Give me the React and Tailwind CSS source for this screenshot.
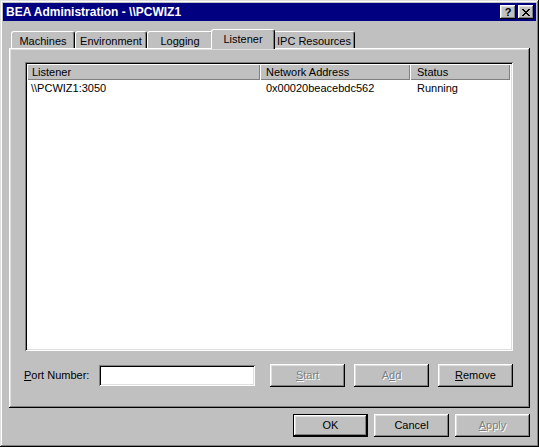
import React from "react";

const raised =
  "shadow-[inset_-1px_-1px_#000,inset_1px_1px_#fff,inset_-2px_-2px_#808080,inset_2px_2px_#dfdfdf]";
const sunken =
  "shadow-[inset_1px_1px_#808080,inset_-1px_-1px_#fff,inset_2px_2px_#000,inset_-2px_-2px_#dfdfdf]";

const tabs = [
  { label: "Machines", w: "w-[64px]" },
  { label: "Environment", w: "w-[72px]" },
  { label: "Logging", w: "w-[66px]" },
  { label: "Listener", w: "w-[64px]", active: true },
  { label: "IPC Resources", w: "w-[82px]" },
];

function Btn({ children, disabled, isDefault, className = "" }) {
  return (
    <button
      type="button"
      className={`w-[75px] h-[23px] bg-[#c0c0c0] flex items-center justify-center leading-none ${
        isDefault
          ? "border border-black shadow-[inset_-1px_-1px_#000,inset_1px_1px_#fff,inset_-2px_-2px_#808080,inset_2px_2px_#dfdfdf]"
          : raised
      } ${disabled ? "text-[#808080] [text-shadow:1px_1px_0_#fff]" : "text-black"} ${className}`}
    >
      {children}
    </button>
  );
}

function CloseGlyph() {
  const px = [
    [0, 0], [1, 0], [6, 0], [7, 0],
    [1, 1], [2, 1], [5, 1], [6, 1],
    [2, 2], [3, 2], [4, 2], [5, 2],
    [3, 3], [4, 3],
    [2, 4], [3, 4], [4, 4], [5, 4],
    [1, 5], [2, 5], [5, 5], [6, 5],
    [0, 6], [1, 6], [6, 6], [7, 6],
  ];
  return (
    <svg width="8" height="7" viewBox="0 0 8 7" shapeRendering="crispEdges">
      {px.map(([x, y]) => (
        <rect key={`${x}-${y}`} x={x} y={y} width="1" height="1" fill="#000" />
      ))}
    </svg>
  );
}

export default function App() {
  return (
    <div
      className="w-[539px] h-[447px] bg-[#c0c0c0] p-[3px] flex flex-col text-[11px] text-black shadow-[inset_-1px_-1px_#000,inset_1px_1px_#dfdfdf,inset_-2px_-2px_#808080,inset_2px_2px_#fff]"
      style={{ fontFamily: '"Liberation Sans", Arial, sans-serif' }}
    >
      {/* title bar */}
      <div className="h-[18px] bg-[#000080] flex items-center pl-[3px] pr-[2px]">
        <span className="text-white font-bold text-[12px] flex-1">
          {"BEA Administration - \\\\PCWIZ1"}
        </span>
        <div className={`w-[16px] h-[14px] bg-[#c0c0c0] ${raised} flex items-center justify-center font-bold text-[11px] leading-none`}>
          ?
        </div>
        <div className={`w-[16px] h-[14px] ml-[2px] bg-[#c0c0c0] ${raised} flex items-center justify-center`}>
          <CloseGlyph />
        </div>
      </div>

      {/* tabs + panel */}
      <div className="mt-[8px] px-[6px]">
        <div className="flex items-end h-[19px] pl-[2px]">
          {tabs.map((t) =>
            t.active ? (
              <div
                key={t.label}
                className={`${t.w} h-[20px] -mb-px -mx-[2px] relative z-10 bg-[#c0c0c0] border-t border-l border-white border-r border-r-black rounded-t-[3px] shadow-[inset_-1px_0_#808080] flex justify-center pt-[1px]`}
              >
                {t.label}
              </div>
            ) : (
              <div
                key={t.label}
                className={`${t.w} h-[17px] bg-[#c0c0c0] border-t border-l border-white border-r border-r-black rounded-t-[3px] shadow-[inset_-1px_0_#808080] flex justify-center pt-[1px]`}
              >
                {t.label}
              </div>
            )
          )}
        </div>

        <div className={`h-[360px] bg-[#c0c0c0] ${raised} flex flex-col`}>
          {/* list view */}
          <div className={`mt-[14px] ml-[16px] w-[488px] h-[289px] bg-white ${sunken} p-[2px]`}>
            <div className="flex h-[16px]">
              <div className="w-[233px] bg-[#c0c0c0] shadow-[inset_1px_1px_#fff,inset_-1px_-1px_#808080] pl-[5px] flex items-center">
                Listener
              </div>
              <div className="w-[150px] bg-[#c0c0c0] shadow-[inset_1px_1px_#fff,inset_-1px_-1px_#808080] pl-[6px] flex items-center">
                Network Address
              </div>
              <div className="w-[100px] bg-[#c0c0c0] shadow-[inset_1px_1px_#fff,inset_-1px_-1px_#808080] pl-[7px] flex items-center">
                Status
              </div>
            </div>
            <div className="flex h-[17px] items-center">
              <div className="w-[233px] pl-[4px]">{"\\\\PCWIZ1:3050"}</div>
              <div className="w-[150px] pl-[6px]">0x00020beacebdc562</div>
              <div className="w-[100px] pl-[7px]">Running</div>
            </div>
          </div>

          {/* port row */}
          <div className="mt-[13px] flex items-center pl-[15px]">
            <div className="w-[75px]">
              <span className="underline">P</span>ort Number:
            </div>
            <div className={`w-[156px] h-[21px] bg-white ${sunken}`} />
            <Btn disabled className="ml-[15px]">
              <span className="underline">S</span>tart
            </Btn>
            <Btn disabled className="ml-[9px]">
              A<span className="underline">d</span>d
            </Btn>
            <Btn className="ml-[9px]">
              <span className="underline">R</span>emove
            </Btn>
          </div>
        </div>
      </div>

      {/* dialog buttons */}
      <div className="mt-[6px] flex justify-end gap-[6px] pr-[6px]">
        <Btn isDefault>OK</Btn>
        <Btn>Cancel</Btn>
        <Btn disabled>
          <span className="underline">A</span>pply
        </Btn>
      </div>
    </div>
  );
}
